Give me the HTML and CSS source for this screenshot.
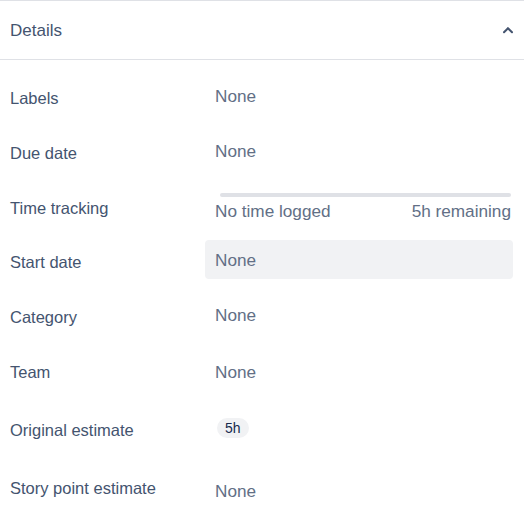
FILE: index.html
```html
<!DOCTYPE html>
<html lang="en">
<head>
<meta charset="utf-8">
<title>Details</title>
<link rel="stylesheet" href="styles.css">
</head>
<body>
<section class="panel">
  <header class="panel-head">
    <span class="panel-title">Details</span>
    <svg class="chevron" width="24" height="24" viewBox="0 0 24 24" aria-hidden="true">
      <path d="M11.586 9.297l-4.293 4.294a1 1 0 0 0 1.414 1.414L12 11.711l3.293 3.294a1 1 0 1 0 1.414-1.414l-4.293-4.294a1 1 0 0 0-1.414 0z" fill="currentColor"/>
    </svg>
  </header>
  <div class="fields">
    <div class="row">
      <span class="label">Labels</span>
      <div class="value up">None</div>
    </div>
    <div class="row">
      <span class="label">Due date</span>
      <div class="value up">None</div>
    </div>
    <div class="row short">
      <span class="label">Time tracking</span>
      <div class="value tracking">
        <div class="bar"></div>
        <div class="bar-text"><span>No time logged</span><span>5h remaining</span></div>
      </div>
    </div>
    <div class="row">
      <span class="label">Start date</span>
      <div class="value boxed">None</div>
    </div>
    <div class="row">
      <span class="label">Category</span>
      <div class="value up">None</div>
    </div>
    <div class="row">
      <span class="label">Team</span>
      <div class="value down">None</div>
    </div>
    <div class="row tall">
      <span class="label">Original estimate</span>
      <div class="value badge-up"><span class="badge">5h</span></div>
    </div>
    <div class="row">
      <span class="label">Story point estimate</span>
      <div class="value down-more">None</div>
    </div>
  </div>
</section>
</body>
</html>
```

FILE: styles.css
```css
html, body {
  margin: 0;
  padding: 0;
  background: #ffffff;
}

body {
  font-family: "Liberation Sans", Arial, sans-serif;
  color: #44546f;
}

.panel {
  width: 524px;
  border-top: 1px solid #dfe1e6;
}

.panel-head {
  height: 58px;
  display: flex;
  align-items: center;
  justify-content: space-between;
  padding: 0 4px 0 10px;
  border-bottom: 1px solid #dfe1e6;
}

.panel-title {
  font-size: 17px;
  color: #44546f;
  margin-top: 2px;
}

.chevron {
  color: #44546f;
  display: block;
}

.fields {
  padding-top: 10px;
}

.row {
  height: 55px;
  display: flex;
  align-items: center;
}

.row.short {
  height: 54px;
}

.row.tall {
  height: 61px;
}

.label {
  width: 195px;
  padding-left: 10px;
  font-size: 16.5px;
  line-height: 20px;
  color: #44546f;
  margin-top: 1px;
}

.value {
  width: 298px;
  padding-left: 10px;
  font-size: 17.2px;
  line-height: 20px;
  color: #626f86;
}

.value.up {
  margin-bottom: 3px;
}

.value.down {
  margin-top: 1px;
}

.value.down-more {
  margin-top: 6px;
}

.tracking {
  width: 296px;
  padding-left: 10px;
  margin-top: 0;
}

.bar {
  height: 4px;
  margin-left: 5px;
  border-radius: 2px;
  background: #dfe1e6;
}

.bar-text {
  display: flex;
  justify-content: space-between;
  margin-top: 4px;
}

.boxed {
  height: 39px;
  display: flex;
  align-items: center;
  background: #f1f2f4;
  border-radius: 4px;
  margin-bottom: 4px;
}

.badge-up {
  margin-bottom: 5px;
}

.badge {
  display: inline-block;
  margin-left: 2px;
  padding: 0 8px;
  height: 20px;
  line-height: 20px;
  font-size: 14px;
  border-radius: 10px;
  background: #f1f2f4;
  color: #172b4d;
}
```
